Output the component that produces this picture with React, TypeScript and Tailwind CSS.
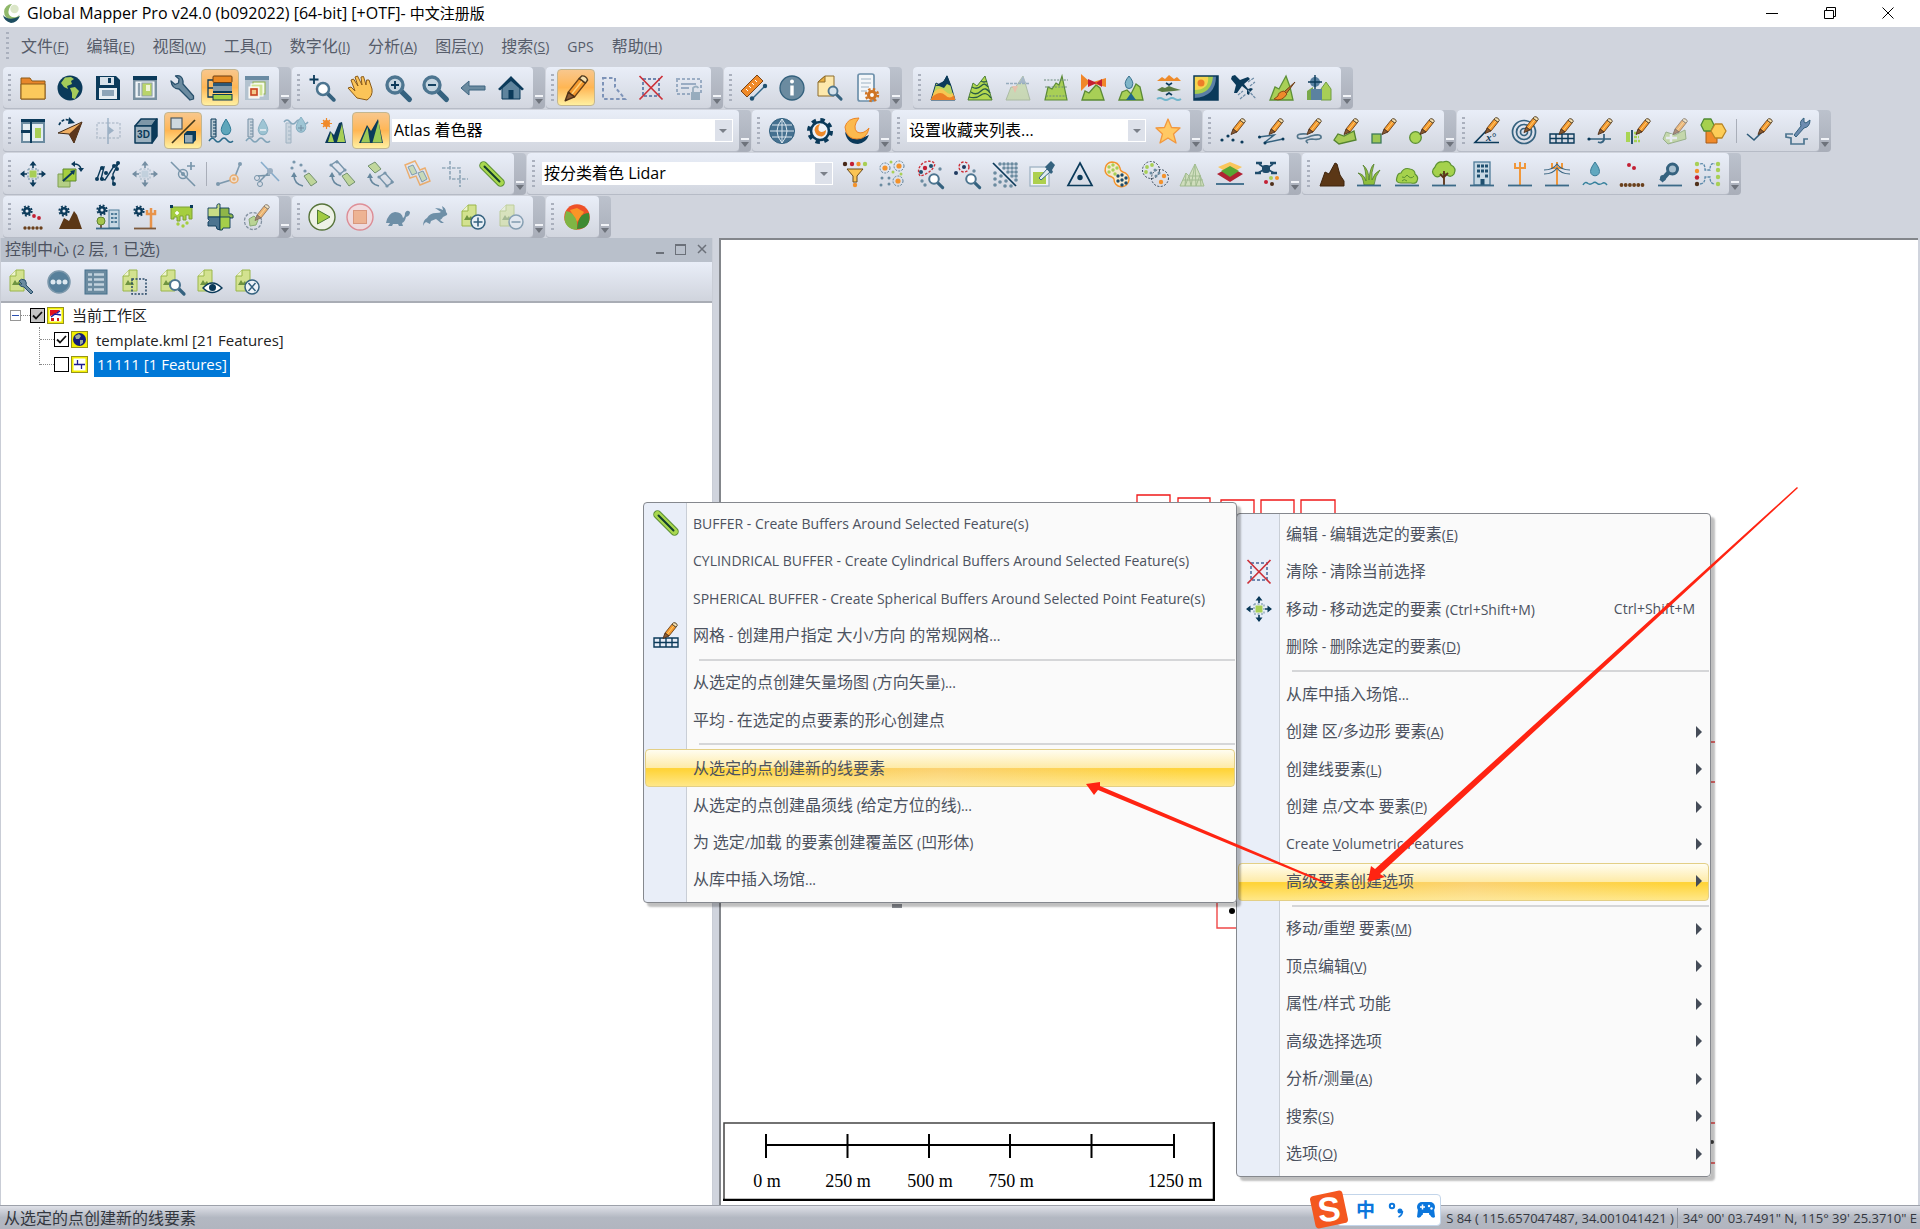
import React, { useState } from "react";

const NAVY = "#0b3a5a";
const SLATE = "#6b8ba0";
const GREEN = "#a8cf56";
const ORANGE = "#f3922c";

const Pencil = ({ t = "" }: { t?: string }) => (
  <g transform={t} strokeWidth="0.9" strokeLinejoin="round">
    <path d="M13 11 20 2.2 24 5.2 17 14Z" fill="#f59a2e" stroke="#6b4218" />
    <path d="M15 12.5 22 3.7" stroke="#ffd27a" />
    <path d="M13 11 17 14 11 16.5Z" fill="#8a5a32" stroke="#4e3018" />
    <path d="M20 2.2 21.6.6Q24.4.3 25.4 3.2L24 5.2Z" fill="#f4dfae" stroke="#4e3a20" />
  </g>
);

const Gear = ({ x, y, r, fill = NAVY, hole = "#e4e8f1" }: { x: number; y: number; r: number; fill?: string; hole?: string }) => (
  <g>
    <circle cx={x} cy={y} r={r * 0.85} fill="none" stroke={fill} strokeWidth={r * 0.35} strokeDasharray={`${r * 0.34} ${r * 0.33}`} />
    <circle cx={x} cy={y} r={r * 0.72} fill={fill} />
    <circle cx={x} cy={y} r={r * 0.28} fill={hole} />
  </g>
);

const Lens = ({ x, y, r = 5, fill = "#fff" }: { x: number; y: number; r?: number; fill?: string }) => (
  <g>
    <path d={`M${x + r * 0.8} ${y + r * 0.8}l${r} ${r}`} stroke="#35627f" strokeWidth={r * 0.65} strokeLinecap="round" />
    <circle cx={x} cy={y} r={r} fill={fill} stroke="#4d7590" strokeWidth={r * 0.42} />
  </g>
);

const Page = () => (
  <g>
    <path d="M2 7 8 1H16V22H2Z" fill="#d3e28f" stroke="#9ab64b" />
    <path d="M8 1V7H2" fill="#eef4cf" stroke="#9ab64b" />
    <path d="M4 16 7 11 9 14 11 12 13 16Z" fill="#6f9440" />
  </g>
);

const Dots = ({ at, fill, r = 1.6 }: { at: number[][]; fill: string; r?: number }) => (
  <g fill={fill}>
    {at.map(([x, y]) => (
      <circle key={`${x}-${y}`} cx={x} cy={y} r={r} />
    ))}
  </g>
);

const Ground = () => <path d="M1 24.5H25" stroke="#3c6a88" strokeWidth="1.8" />;

const Move = ({ fill = GREEN }: { fill?: string }) => (
  <g>
    <path d="M13 1V7M13 19V25M1 13H7M19 13H25" stroke={NAVY} strokeWidth="1.6" />
    <path d="M13 0 16.5 4.5H9.5ZM13 26 16.5 21.5H9.5ZM0 13 4.5 9.5V16.5ZM26 13 21.5 9.5V16.5Z" fill={NAVY} />
    <rect x="8" y="8" width="10" height="10" fill="none" stroke={SLATE} strokeDasharray="2 1.5" />
    <rect x="9.5" y="9.5" width="7" height="7" fill={fill} />
  </g>
);

const GridShape = () => (
  <g>
    <path d="M1 16H25V25H1ZM1 20.5H25M7 16V25M13 16V25M19 16V25" fill="none" stroke={NAVY} strokeWidth="1.4" />
    <Pencil t="translate(-1 0)" />
  </g>
);

const Gauge = () => (
  <g>
    <path d="M3 1H8V19H3Z" fill="#b9c9d3" stroke={NAVY} />
    <path d="M5 4H8M5 7H8M5 10H8M5 13H8M5 16H8" stroke={NAVY} />
    <path d="M1 23Q4 18 7 22T13 22 19 22 25 23" fill="none" stroke="#2a6a8a" strokeWidth="1.5" />
    <path d="M18 1Q12 10 13.5 13.5A4.7 4.7 0 0 0 22.5 13.5Q24 10 18 1Z" fill="#5ea6bb" stroke="#2f7a96" />
  </g>
);

const icons: Record<string, React.ReactNode> = {
  open: (
    <g stroke="#8a5a18">
      <path d="M1 24V3H10L12 6H25V24Z" fill="#e8862a" />
      <path d="M1 24V9H25V24Z" fill="#fbc95c" />
    </g>
  ),
  globe: (
    <g>
      <circle cx="13" cy="13" r="12.5" fill={NAVY} />
      <path d="M4 8 8 2.5 14 2 17 4 14 6 15 9 10 11 11 14 7 12ZM13 13 18 12 22 16 18 24 15 23 15 18Z" fill="#a5cb5a" />
    </g>
  ),
  save: (
    <g>
      <path d="M1 1H21L25 5V25H1Z" fill={NAVY} />
      <rect x="5" y="2" width="14" height="8" fill="#d7e1e9" />
      <rect x="13" y="3" width="3" height="5" fill={NAVY} />
      <rect x="4" y="13" width="18" height="11" fill="#e6edf2" />
      <rect x="7" y="15" width="12" height="6" fill="#8ea5b8" />
    </g>
  ),
  layout: (
    <g>
      <rect x="1" y="1" width="24" height="24" fill="#7890a0" />
      <rect x="1" y="1" width="24" height="4" fill={NAVY} />
      <rect x="4" y="7" width="18" height="15" fill="#dfe7ec" stroke="#fff" />
      <path d="M7 8V21" stroke="#7890a0" strokeWidth="1.6" />
      <rect x="10" y="8" width="10" height="13" fill="#b9d46a" stroke="#8fa0ac" />
      <rect x="14" y="10" width="4" height="6" fill="#eef4d6" />
    </g>
  ),
  wrench: (
    <path d="M2 6 6 9.5 9.5 8 10 4 6.5 1Q13-.5 14 6L14 9 24.5 21 24.5 24 21 25 10 14Q3 14 2 6Z" fill={SLATE} stroke="#28506c" strokeWidth="1.3" strokeLinejoin="round" />
  ),
  control: (
    <g>
      <path d="M6 5H1V22H6M1 13H6" fill="none" stroke={NAVY} strokeWidth="1.3" />
      <rect x="6" y="1" width="19" height="6.5" rx="1" fill="#ea8822" stroke="#6b3f14" />
      <rect x="6" y="8" width="19" height="3" fill="#2c5878" />
      <rect x="6" y="11" width="19" height="5" fill="#8399a8" />
      <rect x="6" y="16" width="19" height="2" fill={NAVY} />
      <rect x="6" y="19.5" width="19" height="5.5" fill="#a3cf45" stroke={NAVY} />
    </g>
  ),
  overlay: (
    <g>
      <rect x="1" y="1" width="24" height="24" fill="#b4c3cf" />
      <rect x="1" y="1" width="24" height="4" fill="#6a8ba3" />
      <rect x="9" y="7" width="12" height="12" fill="#edf4dc" stroke="#8fb04c" />
      <rect x="7" y="9" width="12" height="12" fill="#cfe392" stroke="#fff" />
      <rect x="5" y="12" width="10" height="11" fill="#f6ecd8" stroke="#fff" />
      <rect x="7" y="14" width="6" height="6" fill="#f3c98a" stroke="#c8431f" strokeWidth="1.6" />
    </g>
  ),
  zoomBox: (
    <g>
      <path d="M5 0V9M.5 4.5H9.5" stroke={NAVY} strokeWidth="1.8" />
      <Lens x={14} y={14} r={6} />
    </g>
  ),
  pan: (
    <path d="M1 13 4 12 8 16 4 5 6.5 4 11 11 8 2 10.5 1 15 10 14 2 16.5 1.5 19 10 19.5 5 22 5 25 14Q26 21 20 25L10 23Z" fill="#fbc458" stroke="#8a5a18" strokeLinejoin="round" />
  ),
  zoomIn: (
    <g>
      <Lens x={10} y={10} r={8} fill="#c5d5e0" />
      <path d="M10 6V14M6 10H14" stroke={NAVY} strokeWidth="1.9" />
    </g>
  ),
  zoomOut: (
    <g>
      <Lens x={10} y={10} r={8} fill="#c5d5e0" />
      <path d="M6 10H14" stroke={NAVY} strokeWidth="1.9" />
    </g>
  ),
  back: <path d="M1 13 9 6V11H25V15H9V20Z" fill={SLATE} stroke="#3e6480" />,
  home: (
    <g>
      <path d="M4 13V24H22V13L13 4Z" fill="#5f849d" stroke={NAVY} />
      <path d="M0 14 13 1 26 14 24 15.5 13 6 2 15.5Z" fill={NAVY} />
      <rect x="10.5" y="15" width="5" height="9" fill={NAVY} />
    </g>
  ),
  edit: <Pencil t="translate(-15 0) scale(1.56)" />,
  lasso: (
    <path d="M2 3H14V12L24 24H2Z" fill="none" stroke="#7d93b8" strokeWidth="2" strokeDasharray="3.5 2.5" />
  ),
  clear: (
    <g>
      <rect x="5" y="4" width="16" height="17" fill="none" stroke="#6f87b0" strokeWidth="2" strokeDasharray="3 2" />
      <path d="M1.5 1 24.5 24.5M24.5 1 1.5 24.5" stroke="#cc3038" strokeWidth="1.7" />
    </g>
  ),
  unlock: (
    <g opacity="0.6">
      <rect x="1" y="4" width="24" height="15" fill="none" stroke="#6c88a8" strokeWidth="2" strokeDasharray="3 2" />
      <path d="M5 9H20M5 13H13" stroke="#6c88a8" strokeWidth="2" />
      <rect x="15" y="17" width="9" height="8" fill="#6c8ca3" />
      <path d="M17 17V13Q20 10 22.5 13" fill="none" stroke="#6c8ca3" strokeWidth="1.8" />
    </g>
  ),
  measure: (
    <g>
      <path d="M0 16 16 0 22 6 6 22Z" fill="#f08a28" stroke="#7a4416" />
      <path d="M5 14 7 16M8 11 10 13M11 8 13 10M14 5 16 7" stroke="#fff" />
      <path d="M11 24 24 11" stroke="#2f6485" strokeWidth="1.5" />
      <Dots at={[[11, 23.5], [24, 11]]} fill="#1f5070" r={2.2} />
    </g>
  ),
  info: (
    <g>
      <circle cx="13" cy="13" r="12" fill={SLATE} stroke="#34617d" strokeWidth="1.3" />
      <circle cx="13" cy="6.5" r="2" fill="#fff" />
      <path d="M13 10.5V20.5" stroke="#fff" strokeWidth="3.4" />
    </g>
  ),
  search: (
    <g>
      <path d="M1 21V7L8 1H17V21Z" fill="#fde8ac" stroke="#8d6c2c" />
      <path d="M1 7H8V1Z" fill="#e9ad3e" stroke="#8d6c2c" />
      <Lens x={16} y={16} r={4.5} fill="#d5e2ec" />
    </g>
  ),
  script: (
    <g>
      <rect x="3" y="-1" width="16" height="27" rx="2" fill="#f3f6f9" stroke="#6d90ab" strokeWidth="1.7" />
      <path d="M6 4H16M6 8H16M6 12H14M6 16H12" stroke="#bccad6" strokeWidth="1.5" />
      <Gear x={17} y={20} r={7} fill="#cf7424" hole="#fff" />
    </g>
  ),
  elev: (
    <g>
      <path d="M1 25 6 8 10 10 14 6 17 1 21 11 25 25Z" fill="#bcd35d" stroke={NAVY} />
      <path d="M5 11 10 8 14 6 17 0 21 11 17 9 14 13 9 11Z" fill={NAVY} />
      <path d="M4 17Q10 11 15 16T23 18L25 25H1Z" fill="#f6c752" />
      <path d="M2 22Q10 15 15 20T24 20L25 25H1Z" fill="#ec7f25" />
    </g>
  ),
  contour: (
    <g>
      <path d="M1 25 6 8 10 11 18 1 21 11 25 25Z" fill="#b3d94f" stroke="#4c7f34" />
      <path d="M5 12Q10 15 14 11T21 12M4 17Q9 21 14 16T23 18M2 22Q9 24 14 20T24 23M14 6Q17 8 20 6" fill="none" stroke="#2a5c46" strokeWidth="1.3" />
    </g>
  ),
  cut: (
    <g opacity="0.5">
      <path d="M1 25 6 12 10 13 18 1 21 11 25 25Z" fill="#b9d386" stroke="#7f9a63" />
      <path d="M14 8 18 1 21 8Z" fill="#6d8ca3" />
      <path d="M1 8.5H25" stroke="#4f7590" strokeWidth="1.6" strokeDasharray="3 1" />
      <path d="M7 11H13L10 18Z" fill="#f0a070" />
    </g>
  ),
  volume: (
    <g>
      <path d="M2 25 5 12 9 14 13 8 16 10 19 1 24 25Z" fill={GREEN} stroke="#5b8a36" strokeWidth="1.2" />
      <path d="M1 5H25M2 12H24M3 21H24" stroke="#6b8a7c" strokeDasharray="2 1.3" />
    </g>
  ),
  viewshed: (
    <g>
      <path d="M2 25 5 16 9 18 16 10 20 13 24 25Z" fill={GREEN} stroke="#5b8a36" strokeWidth="1.3" />
      <path d="M1-1 10 7 1 16Z" fill="#f0862a" />
      <path d="M10 8 26 3V12Z" fill="#f0862a" />
      <path d="M8 4 17 8 8 12ZM22 4V12L16 8Z" fill="#c52030" />
    </g>
  ),
  watershed: (
    <g>
      <path d="M1 25 4 17 9 15 13 19 18 9 22 12 25 25Z" fill={GREEN} stroke="#5b8a36" strokeWidth="1.3" />
      <path d="M8 25 13 18 18 25Z" fill="#1f668c" />
      <path d="M11 1Q6 7 7.5 10A3.5 3.5 0 0 0 14.5 10Q16 7 11 1Z" fill="#7fb5c8" stroke="#38718e" />
    </g>
  ),
  combine: (
    <g>
      <path d="M1 6 6 2 9 4 13 0 18 4 21 2 25 6Z" fill="#ee8b2b" />
      <path d="M1 15 6 12 9 13 13 11 18 13 25 15 18 16 6 17Z" fill="#5c7c42" />
      <path d="M10 8 13 10 16 8M10 20 13 18 16 20" stroke={NAVY} strokeWidth="1.7" fill="none" />
      <path d="M1 24Q4 22 7 24T13 24 19 24 25 24" stroke="#6fb5cb" strokeWidth="2" fill="none" />
    </g>
  ),
  heat: (
    <g>
      <rect x="1" y="1" width="24" height="24" fill={NAVY} />
      <path d="M1 1H23Q23 22 1 23Z" fill="#5b7fa5" />
      <path d="M1 1H20Q19 19 1 19Z" fill="#a7cd4d" />
      <path d="M1 1H15Q17 15 1 15Z" fill="#f6d54e" />
      <circle cx="8" cy="8" r="3.5" fill="#ee7d28" />
      <rect x="1" y="1" width="24" height="24" fill="none" stroke={NAVY} strokeWidth="1.5" />
    </g>
  ),
  plane: (
    <g>
      <path d="M1 1 4 0 9 5 17 2 19 4 13 9 17 14 20 13 22 14 19 17 18 20 16 19 16 15 11 11 6 18 3 18 5 10 0 4Z" fill={NAVY} />
      <path d="M17 15 25 24M17 7 23 3M19 11 24 7M7 20 12 16M9 24 15 19" stroke="#6d8ba6" strokeWidth="1.2" strokeDasharray="3 1" />
    </g>
  ),
  paint: (
    <g>
      <path d="M1 25 6 12 10 14 17 1 21 12 24 25Z" fill={GREEN} stroke="#5d9037" strokeWidth="1.3" />
      <path d="M26 7 15 17 17 19Z" fill="#c77930" stroke="#6a3c14" />
      <path d="M15 16Q9 17 9 21L5 24Q13 27 18 19Z" fill="#ee8a2a" stroke="#8a4a16" />
    </g>
  ),
  fly: (
    <g>
      <path d="M1 25V16L7 12V25Z" fill="#79a84a" />
      <path d="M15 25V14L20 7 25 14V25Z" fill={GREEN} stroke="#6f9c43" />
      <rect x="5" y="14" width="11" height="11" fill="#5b82a0" />
      <circle cx="9" cy="7" r="5" fill="#5880a0" />
      <path d="M9 0V14M2 7H16" stroke={NAVY} strokeWidth="1.4" />
    </g>
  ),
  panels: (
    <g>
      <rect x="1" y="1" width="24" height="24" fill={SLATE} />
      <path d="M3 6H10V12H3ZM3 15H10V23H3ZM12 6H23V23H12Z" fill="#e4edf2" />
      <path d="M1 1H25V4H1ZM1 12H11V15H1ZM10 1H12V25H10Z" fill={NAVY} />
      <rect x="15" y="10" width="6" height="10" fill={GREEN} />
    </g>
  ),
  north: (
    <g>
      <path d="M25 4 1 15 12 16 17 25Z" fill="#f0b065" stroke="#422b17" />
      <path d="M25 4 12 16 17 25Z" fill="#5c361b" />
      <path d="M2 7Q6-1 14 3" fill="none" stroke={NAVY} strokeWidth="1.7" strokeDasharray="3 1.5" />
      <path d="M12-1 18 5 11 6Z" fill={NAVY} />
    </g>
  ),
  mirror: (
    <g opacity="0.5">
      <path d="M13 5H2V20H13M13 5H25V20H13" fill="none" stroke="#8fa0b2" strokeWidth="1.5" strokeDasharray="2.5 1.5" />
      <path d="M13 0V26" stroke="#5e82a0" strokeWidth="1.5" />
      <path d="M13 8 19 12.5 13 17Z" fill="#5e82a0" />
    </g>
  ),
  view3d: (
    <g strokeLinejoin="round">
      <path d="M2 8 8 1H24L19 8Z" fill="#7d97a8" stroke={NAVY} strokeWidth="1.5" />
      <path d="M19 8 24 1V18L19 25Z" fill={NAVY} stroke={NAVY} strokeWidth="1.5" />
      <rect x="2" y="8" width="17" height="17" fill="#9cb1bf" stroke={NAVY} strokeWidth="1.5" />
      <text x="10.5" y="20" textAnchor="middle" fontSize="10" fontWeight="700" fontFamily="Liberation Sans, sans-serif" fill={NAVY}>3D</text>
    </g>
  ),
  link3d: (
    <g>
      <rect x="1" y="0" width="11" height="11" fill="#cdd8df" stroke="#4b5b64" strokeWidth="1.2" />
      <path d="M2 25 25 2" stroke="#443a1c" strokeWidth="1.7" />
      <path d="M14 16 17 13H26V22L23 25H14Z" fill={NAVY} />
      <rect x="14.5" y="16.5" width="8.5" height="8.5" fill="#93a9b8" stroke={NAVY} />
    </g>
  ),
  water: <Gauge />,
  waterMinus: (
    <g opacity="0.5">
      <Gauge />
      <path d="M15 12H21" stroke="#fff" strokeWidth="1.5" />
    </g>
  ),
  waterPlus: (
    <g opacity="0.5">
      <path d="M3 5H8V25H3ZM5 9H8M5 13H8M5 17H8M5 21H8" fill="#b9c9d3" stroke={SLATE} />
      <path d="M1 4Q4 0 7 4T13 4 19 4 25 4" fill="none" stroke="#2a6a8a" strokeWidth="1.5" />
      <path d="M18-1Q12 7 13.5 11A4.7 4.7 0 0 0 22.5 11Q24 7 18-1Z" fill="#5ea6bb" stroke="#2f7a96" />
      <path d="M15 10H21M18 7V13" stroke={NAVY} />
    </g>
  ),
  sunHill: (
    <g>
      <path d="M5.5 0V11M0 5.500H11M2 2 9 9M9 2 2 9" stroke="#ee8a2a" strokeWidth="1.2" />
      <circle cx="5.5" cy="5.5" r="3.5" fill="#f08a2a" />
      <path d="M4 25 9 13 13 17 18 5 21 4 25 25Z" fill={NAVY} />
      <path d="M7 24 10 14 13 24ZM16 24 21 6 24 24Z" fill={GREEN} />
    </g>
  ),
  hill: (
    <g>
      <path d="M1 25 9 7 13 13 20 1 25 25Z" fill={NAVY} />
      <path d="M3 24.500 9.500 9 12 24.500ZM14.500 24.500 20.500 3 24 24.500Z" fill="#9cc956" />
    </g>
  ),
  web: (
    <g fill="none" stroke="#dbe6ee">
      <circle cx="13" cy="13" r="12.5" fill="#467190" stroke="#31607f" />
      <path d="M1 13H25M3 7H23M3 19H23M13 1V25M13 1Q3 13 13 25M13 1Q23 13 13 25" />
    </g>
  ),
  moonGear: (
    <g>
      <circle cx="13" cy="13" r="11" fill="none" stroke={NAVY} strokeWidth="4" strokeDasharray="4.32 4.32" />
      <circle cx="13" cy="13" r="9" fill="#eef2f8" stroke={NAVY} strokeWidth="2.6" />
      <path d="M13 6Q8 7 7.5 12Q9 19 15 18.5Q19 17 19 12Q14 16 11.5 12Q11 9 13 6Z" fill="#f08a2a" />
    </g>
  ),
  moon: (
    <g>
      <path d="M1 14Q3 26 14 26Q22 25 25 17Q13 24 1 14Z" fill={NAVY} />
      <path d="M15 0Q3 0 1 9Q2 21 13 21Q23 21 25 10Q19 17 13 14Q8 9 15 0Z" fill="#fbb94e" stroke="#ec8527" />
    </g>
  ),
  star: (
    <path d="M13 1 16.5 9.500 25 10 18.500 16 21 25 13 20 5 25 7.500 16 1 10 9.500 9.500Z" fill="#ffc964" stroke="#f2983f" strokeWidth="1.3" strokeLinejoin="round" />
  ),
  drawPoints: (
    <g>
      <Dots at={[[2, 22], [8, 18], [13, 22], [22, 24]]} fill={NAVY} />
      <Pencil />
    </g>
  ),
  drawLine: (
    <g>
      <path d="M1 19 16 17 6 25 25 21" fill="none" stroke="#35627f" strokeWidth="1.5" />
      <Dots at={[[1.5, 19], [7, 25], [25, 21]]} fill={NAVY} r={1.5} />
      <Pencil />
    </g>
  ),
  drawFree: (
    <g>
      <path d="M11 16Q-1 15 2 20Q5 22 15 18Q26 15 25 20Q23 22 16 21Q7 22 12 25" fill="none" stroke="#54768c" strokeWidth="1.7" />
      <Pencil />
    </g>
  ),
  drawArea: (
    <g>
      <path d="M1 22 5 16 11 18 21 13 23 22 6 26Z" fill="#a6ca57" stroke="#54842f" strokeWidth="1.3" />
      <Pencil />
    </g>
  ),
  drawRect: (
    <g>
      <rect x="1" y="16" width="9" height="9" fill="#9cc654" stroke="#3e7a5a" strokeWidth="1.3" />
      <Pencil />
    </g>
  ),
  drawCircle: (
    <g>
      <circle cx="6.5" cy="19.5" r="5.8" fill="#a9d553" stroke="#5b8f34" strokeWidth="1.3" />
      <Pencil />
    </g>
  ),
  angle: (
    <g>
      <path d="M25 24.5H1L14 11" fill="none" stroke={NAVY} strokeWidth="1.6" />
      <text x="17" y="23" textAnchor="middle" fontSize="11" fontStyle="italic" fontWeight="700" fontFamily="Liberation Serif, serif" fill={NAVY}>x°</text>
      <Pencil t="translate(0 -1)" />
    </g>
  ),
  rings: (
    <g>
      <g fill="none" stroke="#35627f" strokeWidth="1.7">
        <circle cx="12" cy="14" r="11.5" />
        <circle cx="12" cy="14" r="7.5" />
        <circle cx="12" cy="14" r="3.5" />
      </g>
      <Pencil t="translate(1 -2)" />
    </g>
  ),
  grid: <GridShape />,
  cogo: (
    <g>
      <path d="M1 21H24M17 16V22Q15 26 11 24" fill="none" stroke="#35627f" strokeWidth="1.7" />
      <Dots at={[[2, 21]]} fill={NAVY} />
      <Pencil />
    </g>
  ),
  mirrorDraw: (
    <g>
      <path d="M7 12V26" stroke={NAVY} strokeWidth="1.7" />
      <path d="M5 14H1V24H5Z" fill="#a9d553" />
      <path d="M9 15H15M9 19H14M9 23H15" stroke="#a9d553" strokeWidth="2.6" strokeDasharray="3 1" />
      <Pencil />
    </g>
  ),
  moveArea: (
    <g opacity="0.6">
      <path d="M1 21 4 14 13 17 23 12 24 21 6 26Z" fill="#b6d385" stroke="#6f9450" />
      <path d="M4 20H15M9 16V24" stroke="#eef2f7" strokeWidth="2.5" />
      <Pencil />
    </g>
  ),
  hexes: (
    <g strokeLinejoin="round">
      <path d="M6 10H17V25H6Z" fill="#f08a2a" stroke="#a65c1b" />
      <path d="M1 7 4 1H11L14 7 11 13H4Z" fill="#a6d04c" stroke="#4f8a35" strokeWidth="1.3" />
      <path d="M11 13 15 6H22L26 13 22 20H15Z" fill="#fdcd57" stroke="#b98526" strokeWidth="1.3" />
    </g>
  ),
  finish: (
    <g>
      <path d="M0 16 7 22 15 14" fill="none" stroke="#2d5a78" strokeWidth="1.6" />
      <Pencil />
    </g>
  ),
  repair: (
    <g>
      <path d="M9 16H2V19L7 20V26H20V21H24" fill="none" stroke="#4d7590" strokeWidth="1.7" />
      <path d="M10 17 17 8Q15 3 20 0L20 4 22 5 26 2Q26 9 20 10L12 19Z" fill="#6d8cb0" stroke="#35627f" />
    </g>
  ),
  move: <Move />,
  rotate: (
    <g>
      <path d="M1 13H13V26H1Z" fill="#b4cf85" stroke="#7ea050" />
      <path d="M6 8H19V20H6Z" fill="#a6cf3f" stroke="#5d8a30" />
      <path d="M6 20 16 11" stroke={NAVY} strokeWidth="2" />
      <path d="M18 9 17 14 13 10Z" fill={NAVY} />
      <path d="M17 3Q23 3 24 8" fill="none" stroke={NAVY} strokeWidth="1.5" />
      <path d="M18 0V6L14 3ZM21 7H27L24 11Z" fill={NAVY} />
    </g>
  ),
  vertices: (
    <g>
      <path d="M2 18 6 7 9 6 6 18 10 19 19 5 23 3 18 13 18 23" fill="none" stroke={NAVY} strokeWidth="1.4" />
      <Dots at={[[2, 18], [7, 7], [7, 18], [11, 12], [19, 5], [23, 2], [22, 8], [18, 17], [19, 23]]} fill={NAVY} r={2} />
    </g>
  ),
  moveOff: (
    <g opacity="0.5">
      <Move fill="#a8c0d0" />
    </g>
  ),
  addVertex: (
    <g opacity="0.6">
      <path d="M1 1 25 25" stroke="#35627f" strokeWidth="1.6" />
      <circle cx="13" cy="13" r="4.5" fill="none" stroke="#35627f" strokeWidth="1.4" />
      <circle cx="13" cy="13" r="2" fill="#35627f" />
      <path d="M21 1V9M17 5H25" stroke="#35627f" strokeWidth="1.7" />
    </g>
  ),
  trace: (
    <g opacity="0.65">
      <path d="M2 23 18 18 24 3" fill="none" stroke="#4d7590" strokeWidth="1.6" />
      <Dots at={[[2, 23], [24, 3]]} fill="#4d7590" r={2} />
      <circle cx="18" cy="18" r="4" fill="#f8dfc3" stroke={ORANGE} strokeWidth="1.5" />
      <circle cx="18" cy="18" r="1.8" fill={ORANGE} />
    </g>
  ),
  split: (
    <g opacity="0.6">
      <path d="M7 1 25 20" stroke="#4c88b5" strokeWidth="1.6" />
      <path d="M17 9 5 21M4 15 16 14" stroke="#35627f" strokeWidth="1.5" />
      <circle cx="16" cy="10" r="3" fill="#6d8ca6" />
      <circle cx="3" cy="17" r="2.5" fill="none" stroke="#35627f" />
      <circle cx="6" cy="23" r="2.5" fill="none" stroke="#35627f" />
    </g>
  ),
  convertPoints: (
    <g opacity="0.7">
      <Dots at={[[3, 1], [1, 7], [10, 4], [14, 10]]} fill="#4d7590" />
      <path d="M13 15 18 12 26 21 20 25Z" fill="#b4d27a" stroke="#47703c" />
      <path d="M3 14Q3 23 12 25" fill="none" stroke="#35627f" strokeWidth="1.6" />
      <path d="M0 16 3 11 6 16Z" fill="#35627f" />
    </g>
  ),
  convertLine: (
    <g opacity="0.7">
      <path d="M2 4 8 0 16 9 11 13Z" fill="none" stroke="#4d7590" strokeWidth="1.4" />
      <Dots at={[[2, 4], [8, 1], [16, 9], [11, 13]]} fill="#4d7590" />
      <path d="M13 15 18 12 26 21 20 25Z" fill="#b4d27a" stroke="#47703c" />
      <path d="M3 14Q3 23 12 25" fill="none" stroke="#35627f" strokeWidth="1.6" />
      <path d="M0 16 3 11 6 16Z" fill="#35627f" />
    </g>
  ),
  convertArea: (
    <g opacity="0.7">
      <path d="M1 5 8 1 14 8 8 12Z" fill="#b4d27a" stroke="#47703c" />
      <path d="M12 16 18 12 26 21 20 25Z" fill="none" stroke="#4d7590" strokeWidth="1.4" />
      <Dots at={[[12, 16], [18, 12], [25, 21], [20, 25]]} fill="#4d7590" />
      <path d="M3 15Q3 23 12 25" fill="none" stroke="#35627f" strokeWidth="1.6" />
      <path d="M0 17 3 12 6 17Z" fill="#35627f" />
    </g>
  ),
  combineAreas: (
    <g opacity="0.65">
      <path d="M1 4 11 0 16 9 21 7 26 20 16 24 12 15 6 17Z" fill="none" stroke={ORANGE} strokeWidth="1.4" />
      <path d="M4 6 9 4 13 12 8 14ZM14 12 19 10 23 18 18 21Z" fill="#bcd6a0" stroke="#4d7590" />
    </g>
  ),
  crop: (
    <path opacity="0.45" d="M8 0V18H26M0 7H18V26" fill="none" stroke="#35627f" strokeWidth="1.7" strokeDasharray="3.5 1.5" />
  ),
  buffer: (
    <g strokeLinecap="round">
      <path d="M4.5 4.500 21.500 21.500" stroke="#5b8f34" strokeWidth="8.5" />
      <path d="M4.5 4.500 21.500 21.500" stroke="#a9d84f" strokeWidth="6.5" />
      <path d="M5.500 5.500 20.500 20.500" stroke="#123c2c" strokeWidth="2" />
    </g>
  ),
  filter: (
    <g>
      <Dots at={[[3, 3]]} fill="#472818" r={2.2} />
      <Dots at={[[10, 3]]} fill="#c32034" r={2.2} />
      <Dots at={[[16.5, 3], [13, 24]]} fill={ORANGE} r={2.2} />
      <Dots at={[[23, 3]]} fill={GREEN} r={2.2} />
      <path d="M5 8H21L15 15V21H11V15Z" fill="#fbc555" stroke="#6a4a1c" strokeLinejoin="round" />
    </g>
  ),
  cluster: (
    <g>
      <g fill="none" stroke="#5c8199" strokeDasharray="2 1.2">
        <circle cx="6" cy="7" r="5" />
        <circle cx="20" cy="5" r="5" />
        <circle cx="19" cy="20" r="5" />
      </g>
      <Dots at={[[6, 7], [20, 5], [19, 20]]} fill={ORANGE} r={2.6} />
      <Dots at={[[12, 1], [14, 11], [22, 13]]} fill={GREEN} r={1.5} />
      <Dots at={[[3, 17], [10, 17], [2, 24], [10, 23]]} fill={SLATE} r={1.5} />
    </g>
  ),
  clusterFind: (
    <g>
      <path d="M3 15Q-1 8 6 2Q14-2 18 3Q15 12 3 15Z" fill="none" stroke="#cc3038" strokeWidth="1.4" strokeDasharray="2.5 1.5" />
      <Dots at={[[8, 7]]} fill="#c32034" r={2.2} />
      <Dots at={[[4, 11], [14, 5]]} fill="#1f5070" r={2} />
      <Dots at={[[23, 8], [5, 20], [8, 24]]} fill={SLATE} r={1.7} />
      <Lens x={17} y={18} r={4.8} />
    </g>
  ),
  pointFind: (
    <g>
      <circle cx="10" cy="6" r="5" fill="none" stroke="#cc3038" strokeWidth="1.4" strokeDasharray="2.5 1.5" />
      <Dots at={[[10, 6], [2, 12]]} fill="#1f3a60" r={2} />
      <Dots at={[[20, 10]]} fill={SLATE} r={1.7} />
      <Lens x={17} y={18} r={4.8} />
    </g>
  ),
  thin: (
    <g>
      <Dots at={[[8, 3], [12, 3], [16, 3], [20, 3], [24, 3], [12, 7], [16, 7], [20, 7], [24, 7], [16, 11], [20, 11], [24, 11], [20, 15], [24, 15], [24, 19]]} fill={SLATE} r={1.8} />
      <Dots at={[[3, 12], [9, 15], [3, 18], [14, 20], [8, 21], [3, 24], [13, 25], [19, 25]]} fill={SLATE} r={1.8} />
      <path d="M1 2 24 25" stroke={NAVY} strokeWidth="1.7" />
    </g>
  ),
  picker: (
    <g>
      <rect x="1" y="6" width="19" height="19" fill="#eef2f6" stroke="#9fb3c4" strokeWidth="1.3" />
      <rect x="4" y="11" width="13" height="12" fill="#add04e" />
      <path d="M10 17 18 8 21 11 12 19Z" fill="#dfeaf2" stroke="#3c6a88" />
      <path d="M16 6 18 4 22 0 26 4 23 9 24 11 22 13Z" fill="#35627f" />
    </g>
  ),
  triangle: (
    <g>
      <path d="M13 2 25 24.5H1Z" fill="none" stroke={NAVY} strokeWidth="1.7" />
      <circle cx="13" cy="16.5" r="2.7" fill={NAVY} />
    </g>
  ),
  segment: (
    <g>
      <path d="M8 1A7.5 7.5 0 0 0 5 15Q9 16 10 18A7.5 7.5 0 1 0 19 11Q16 10 16 7Q14 1 8 1Z" fill="#f5ead0" stroke={ORANGE} strokeWidth="1.4" />
      <Dots at={[[5, 6], [9, 4], [13, 7], [5, 11], [9, 9], [11, 13]]} fill={GREEN} r={1.7} />
      <Dots at={[[14, 15], [18, 14], [22, 17], [14, 20], [18, 19], [22, 22], [18, 24]]} fill="#1f4c6c" r={1.7} />
    </g>
  ),
  compare: (
    <g>
      <circle cx="9" cy="9" r="8.5" fill="none" stroke="#3a4a5a" strokeDasharray="2 1.5" />
      <circle cx="18" cy="17" r="8.5" fill="none" stroke="#3a4a5a" strokeDasharray="2 1.5" />
      <Dots at={[[5, 6], [10, 4], [4, 11]]} fill={GREEN} r={1.9} />
      <Dots at={[[9, 12], [13, 9], [14, 15], [17, 12]]} fill={SLATE} r={1.5} />
      <Dots at={[[22, 15], [19, 21]]} fill={ORANGE} r={2.2} />
    </g>
  ),
  mesh: (
    <g opacity="0.55" fill="none" stroke="#74a04a">
      <path d="M1 25 7 12 10 15 16 3 21 14 25 25Z" fill="#cadf9e" />
      <path d="M7 12 6 25 10 15 12 25 16 3 17 25 21 14 22 25M4 19 24 19M10 15H21" />
    </g>
  ),
  layers: (
    <g>
      <path d="M0 13 13 6 26 13 13 21Z" fill="#b02233" />
      <path d="M1 6 13 1 25 6 13 13Z" fill="#fac65c" />
      <path d="M4 10 13 5 22 10 13 16Z" fill="#57a634" />
      <path d="M-1 23H27" stroke="#3c6a88" strokeWidth="1.8" />
    </g>
  ),
  drone: (
    <g>
      <path d="M5 3 9 6H15L19 3M4 12 9 9H15L20 12" fill="none" stroke="#1f4c6c" strokeWidth="1.6" />
      <path d="M2 2H8M16 2H22M1 12H7M17 12H23" stroke="#1f4c6c" strokeWidth="2.4" />
      <rect x="8" y="4" width="8" height="8" rx="3" fill="#1f4c6c" />
      <Dots at={[[17, 17]]} fill={GREEN} r={2} />
      <Dots at={[[23, 17]]} fill={ORANGE} r={2} />
      <Dots at={[[12, 21]]} fill="#c32034" r={2} />
      <Dots at={[[18, 23]]} fill="#50301a" r={2} />
    </g>
  ),
  terrain: <path d="M1 25 6 11 10 13 16 2 18 3 21 14 25 20V25Z" fill="#5b3716" stroke="#3e240d" />,
  grass: (
    <g>
      <path d="M8 24Q7 15 2 12Q8 13 10 20Q10 8 7 4Q13 9 13 19Q14 6 18 3Q15 12 16 19Q18 12 24 9Q19 15 18 24Z" fill="#8fbe3c" stroke="#527f2c" strokeWidth="0.8" />
      <Ground />
    </g>
  ),
  bush: (
    <g>
      <path d="M7 22Q1 22 3 16Q4 12 7 12Q10 6 16 8Q21 9 21 13Q25 16 23 20Q22 23 17 22Z" fill="#a5d24c" stroke="#5c9132" strokeWidth="1.2" />
      <path d="M8 16Q11 18 13 14Q17 19 20 15M8 20Q10 17 13 20" fill="none" stroke="#5c9132" />
      <Ground />
    </g>
  ),
  tree: (
    <g>
      <path d="M4 15Q-1 11 4 6Q6 0 12 1Q18-1 20 4Q26 7 23 13Q20 17 16 14L13 12 10 14Q7 17 4 15Z" fill="#a5d24c" stroke="#5c9132" strokeWidth="1.2" />
      <path d="M13 10V24M13 17 9 13M13 16 17 12" stroke="#5a3216" strokeWidth="1.8" />
      <Ground />
    </g>
  ),
  building: (
    <g>
      <rect x="5" y="1" width="16" height="23" fill="#c7d8e4" stroke="#4f7c99" strokeWidth="1.3" />
      <path d="M8 5H11M12 5H15M16 5H19M8 10H11M12 10H15M16 10H19M8 15H11M16 15H19" stroke="#1f5070" strokeWidth="3" />
      <rect x="11.5" y="18" width="4" height="6" fill="#1f5070" />
      <Ground />
    </g>
  ),
  pole: (
    <g>
      <path d="M13 1V24M8 2V7H18V2" fill="none" stroke="#f0973a" strokeWidth="2" />
      <Ground />
    </g>
  ),
  wires: (
    <g>
      <path d="M13 1V24M8 2V7H18V2" fill="none" stroke="#f0973a" strokeWidth="2" />
      <path d="M0 9Q9 9 13 3Q17 9 26 9M0 13Q9 13 13 7Q17 13 26 13" fill="none" stroke="#35627f" strokeWidth="1.1" />
      <Ground />
    </g>
  ),
  waterClass: (
    <g>
      <path d="M13 1Q7 9 9 12.5A4.6 4.6 0 0 0 17 12.5Q19 9 13 1Z" fill="#62a8bf" stroke="#3a7b97" />
      <path d="M1 24Q3 20 6 22.5Q8 24 11 22Q13 20 16 23Q18 24 21 22Q23 21 25 24" fill="none" stroke="#35809c" strokeWidth="1.5" />
    </g>
  ),
  rail: (
    <g>
      <Dots at={[[10, 4], [15, 7]]} fill="#c32034" r={2} />
      <Dots at={[[2.5, 24], [6.7, 24], [10.9, 24], [15.1, 24], [19.3, 24], [23.5, 24]]} fill="#6a401c" r={1.9} />
    </g>
  ),
  key: (
    <g>
      <path d="M4 20 12 11" stroke="#35627f" strokeWidth="4.5" />
      <circle cx="15.5" cy="8" r="5" fill="#a9c0d0" stroke="#35627f" strokeWidth="3" />
      <circle cx="6" cy="17" r="3" fill="#35627f" />
      <Ground />
    </g>
  ),
  classify: (
    <g>
      <Dots at={[[3, 3], [24, 3], [24, 9], [24, 16], [24, 23]]} fill={GREEN} r={2.2} />
      <Dots at={[[3, 10]]} fill={ORANGE} r={2.2} />
      <Dots at={[[3, 16.5]]} fill="#c32034" r={2.2} />
      <Dots at={[[3, 23]]} fill="#50301a" r={2.2} />
      <path d="M6 3Q11 1 11 9H16Q16 1 21 3M6 23Q11 23 11 16H16Q16 23 21 23" fill="none" stroke="#5d8bab" strokeDasharray="3 1" strokeWidth="1.3" />
    </g>
  ),
  autoRail: (
    <g>
      <Gear x={7} y={7} r={5.5} />
      <Dots at={[[14, 12], [19, 14]]} fill="#c32034" r={1.9} />
      <Dots at={[[5, 24], [9, 24], [13, 24], [17, 24], [21, 24]]} fill="#6a401c" r={1.7} />
    </g>
  ),
  autoTerrain: (
    <g>
      <path d="M2 25 7 14 12 17 17 7 20 11 25 25Z" fill="#5b3716" />
      <Gear x={7} y={7} r={5.5} />
    </g>
  ),
  autoBuilding: (
    <g>
      <rect x="14" y="6" width="10" height="18" fill="#c7d8e4" stroke="#4f7c99" />
      <path d="M16 10H22M16 14H22M16 18H22" stroke="#4f7c99" strokeWidth="2" strokeDasharray="2.5 1" />
      <path d="M6 17V24" stroke="#5a3216" strokeWidth="1.5" />
      <circle cx="6" cy="17" r="4" fill="#a5c54c" stroke="#5c8132" />
      <Gear x={7} y={6} r={5.5} />
      <Ground />
    </g>
  ),
  autoPole: (
    <g>
      <path d="M19 4V24M15 6V10H23V6" fill="none" stroke="#e8934a" strokeWidth="2.5" />
      <path d="M2 24.5H24" stroke="#7d5a3c" strokeWidth="1.8" />
      <Gear x={7} y={7} r={5.5} />
    </g>
  ),
  drip: (
    <g>
      <path d="M2 3H23V15H20V11H17V16H14V12H11V17H8V13H5V15H2Z" fill="#a5ce3f" stroke="#7da034" />
      <path d="M8 7V11M6 9H10" stroke="#fff" strokeWidth="1.5" />
      <path d="M1 1H4V4H1ZM21 1H24V4H21Z" fill={NAVY} />
      <Dots at={[[9, 20], [14, 22], [18, 19]]} fill="#a5ce3f" r={1.7} />
    </g>
  ),
  puzzle: (
    <g stroke={NAVY} strokeWidth="0.9">
      <path d="M1 4H10Q9-1 13 0V13H1Z" fill="#c9dc85" />
      <path d="M13 4H22V10Q27 9 26 14H13Z" fill="#8fb548" />
      <path d="M1 13H13V26Q9 26 9 22H1V18Q4 17 1 15Z" fill="#4c7490" />
      <path d="M13 13H23V24H16Q16 27 13 26Z" fill="#a5ce4a" />
    </g>
  ),
  magic: (
    <g opacity="0.65">
      <circle cx="9" cy="17" r="8.5" fill="none" stroke="#52667a" strokeWidth="1.3" strokeDasharray="3 1.5" />
      <path d="M5 15 10 12 14 16 12 21 6 22Z" fill="#a9cf6a" stroke="#5d9037" />
      <Pencil />
    </g>
  ),
  play: (
    <g>
      <circle cx="13" cy="13" r="13" fill="#eef2e6" stroke="#57743a" strokeWidth="1.4" />
      <path d="M8.5 6 21 13 8.500 20Z" fill="#a2cb43" stroke="#4e7a34" />
    </g>
  ),
  stop: (
    <g opacity="0.7">
      <circle cx="13" cy="13" r="13" fill="#f6dadb" stroke="#dd6a72" strokeWidth="1.4" />
      <rect x="6.5" y="6.5" width="13" height="13" fill="#f5a06e" stroke="#d87a50" />
    </g>
  ),
  turtle: (
    <path d="M1 19Q3 9 10 8Q17 8 18 14Q20 13 20 9Q22 5 25 8Q25 12 21 13Q20 18 17 19L18 22H14L13 20H8L7 22H3L5 19Z" fill="#6e8fa7" />
  ),
  rabbit: (
    <path d="M1 22Q1 16 5 14Q8 9 14 9Q18 9 19 8L13 4Q18 4 21 6L20 2Q24 4 24 8Q26 10 25 11L21 13Q20 15 18 16L22 19 19 19 14 15 9 17 8 20 4 18Q2 19 1 22Z" fill="#6e8fa7" />
  ),
  pageAdd: (
    <g>
      <Page />
      <circle cx="18" cy="18" r="7" fill="#e7eff6" stroke="#35627f" strokeWidth="1.5" />
      <path d="M18 13.5V22.5M13.5 18H22.5" stroke="#35627f" strokeWidth="1.6" />
    </g>
  ),
  pageRemove: (
    <g opacity="0.5">
      <Page />
      <circle cx="18" cy="18" r="7" fill="#e7eff6" stroke="#35627f" strokeWidth="1.5" />
      <path d="M13.5 18H22.5" stroke="#35627f" strokeWidth="1.6" />
    </g>
  ),
  leaf: (
    <g>
      <circle cx="13" cy="13" r="12.8" fill="#ee5128" />
      <path d="M6 6 13 4 20 8 13 18Z" fill="#fb9526" />
      <path d="M2 7Q10 8 13 18V26Q1 25 .5 14Z" fill="#7fb544" />
      <path d="M25 9Q14 9 13 25Q25 25 25.5 14Z" fill="#3f8a32" />
    </g>
  ),
  pageWrench: (
    <g>
      <Page />
      <path d="M11 12Q13 9 17 11Q19 14 18 16L25 23 23 25 16 18Q12 18 11 15L14 15Z" fill={SLATE} stroke="#28506c" />
    </g>
  ),
  more: (
    <g>
      <circle cx="13" cy="13" r="11" fill="#57809b" stroke="#7c98ab" strokeWidth="1.5" />
      <Dots at={[[7, 13], [13, 13], [19, 13]]} fill="#dde8f0" r={2.5} />
    </g>
  ),
  tableIcon: (
    <g>
      <rect x="2" y="1" width="22" height="24" fill="#6b8ba0" stroke="#46708c" />
      <path d="M5 5.500H9M11 5.500H21M5 10.500H9M11 10.500H21M5 15.500H9M11 15.500H21M5 20.500H9M11 20.500H21" stroke="#c2d2dd" strokeWidth="2.4" />
    </g>
  ),
  pageSelect: (
    <g>
      <Page />
      <rect x="11" y="10" width="14" height="15" fill="none" stroke="#2a4a68" strokeWidth="1.5" strokeDasharray="2 1.5" />
    </g>
  ),
  pageZoom: (
    <g>
      <Page />
      <Lens x={16} y={16} r={5} />
    </g>
  ),
  pageEye: (
    <g>
      <Page />
      <path d="M7 19Q16 9 26 19Q16 28 7 19Z" fill="#fff" stroke={NAVY} strokeWidth="1.4" />
      <circle cx="16.5" cy="18.5" r="3.5" fill={NAVY} />
    </g>
  ),
  pageClose: (
    <g>
      <Page />
      <circle cx="18" cy="18" r="7" fill="#eef3f8" stroke="#35627f" strokeWidth="1.5" />
      <path d="M14.5 14 21.500 22M21.500 14 14.500 22" stroke="#35627f" strokeWidth="1.5" />
    </g>
  ),
};

const Icon = ({ name }: { name: string }) => (
  <svg viewBox="0 0 26 26" className="size-[26px] shrink-0 overflow-visible" fill="none" aria-hidden="true">
    {icons[name]}
  </svg>
);

const ToolButton = ({ name, active }: { name: string; active?: boolean }) => (
  <button
    type="button"
    aria-label={name}
    className={`flex h-[37px] min-w-0 flex-1 items-center justify-center rounded-sm border ${active ? "border-[#c3b690] bg-gradient-to-b from-[#f8c78c] via-[#ffb653] to-[#fff0a0]" : "border-transparent"}`}
  >
    <Icon name={name} />
  </button>
);

const Tools = ({ names, active = [] }: { names: string; active?: string[] }) => (
  <>
    {names.split(" ").map((name) =>
      name === "|" ? (
        <span key={name} className="mx-1 h-6 w-px shrink-0 bg-[#a9aeb9]" />
      ) : (
        <ToolButton key={name} name={name} active={active.includes(name)} />
      ),
    )}
  </>
);

const Grip = () => (
  <span className="mx-[3px] h-7 w-[3px] shrink-0 bg-[repeating-linear-gradient(180deg,#aab0bd_0px,#aab0bd_2px,transparent_2px,transparent_5px)]" />
);

const Toolbar = ({ width, children }: { width: string; children: React.ReactNode }) => (
  <div className={`flex h-[42px] shrink-0 rounded bg-gradient-to-b from-[#bcc2cd] to-[#a9aeb9] ${width}`}>
    <div className="flex min-w-0 flex-1 items-center rounded border-b border-[#b6bbc6] bg-gradient-to-b from-[#e9eef8] to-[#d2d6df] pr-[3px] pl-[2px]">
      <Grip />
      {children}
    </div>
    <button type="button" aria-label="toolbar options" className="flex w-3 flex-col items-center justify-end gap-[2px] pb-[5px]">
      <span className="h-[2px] w-2 bg-[#f1f3f7]" />
      <span className="border-x-4 border-t-[5px] border-x-transparent border-t-[#6e737c]" />
    </button>
  </div>
);

const ToolSelect = ({ label, value, className }: { label: string; value: string; className: string }) => (
  <div className={`relative shrink-0 ${className}`}>
    <select aria-label={label} className="block h-[23px] w-full appearance-none bg-white pr-5 pl-[2px] text-[16px] leading-[23px] text-black">
      <option>{value}</option>
    </select>
    <span className="pointer-events-none absolute inset-y-px right-px flex w-[17px] items-center justify-center bg-[#dde1ea]">
      <span className="border-x-4 border-t-4 border-x-transparent border-t-[#7b8089]" />
    </span>
  </div>
);

// Latin runs are set smaller than the Chinese text; "_X" marks a mnemonic.
const Label = ({ text }: { text: string }) => (
  <>
    {text.split(/([\x20-\x7e]+)/).map((run, i) =>
      i % 2 ? (
        <span key={i} className="text-[14px]">
          {run.split(/(_[A-Z])/).map((part, j) => (j % 2 ? <u key={j}>{part[1]}</u> : part))}
        </span>
      ) : (
        run
      ),
    )}
  </>
);

const menuBar = ["文件(_F)", "编辑(_E)", "视图(_W)", "工具(_T)", "数字化(_I)", "分析(_A)", "图层(_Y)", "搜索(_S)", "GPS", "帮助(_H)"];

interface MenuEntry {
  text: string;
  icon?: string;
  shortcut?: string;
  sub?: boolean;
  active?: boolean;
}

const contextMenu: (MenuEntry | null)[] = [
  { text: "编辑 - 编辑选定的要素(_E)" },
  { text: "清除 - 清除当前选择", icon: "clear" },
  { text: "移动 - 移动选定的要素 (Ctrl+Shift+M)", icon: "move", shortcut: "Ctrl+Shift+M" },
  { text: "删除 - 删除选定的要素(_D)" },
  null,
  { text: "从库中插入场馆..." },
  { text: "创建 区/多边形 要素(_A)", sub: true },
  { text: "创建线要素(_L)", sub: true },
  { text: "创建 点/文本 要素(_P)", sub: true },
  { text: "Create _Volumetric Features", sub: true },
  { text: "高级要素创建选项", sub: true, active: true },
  null,
  { text: "移动/重塑 要素(_M)", sub: true },
  { text: "顶点编辑(_V)", sub: true },
  { text: "属性/样式 功能", sub: true },
  { text: "高级选择选项", sub: true },
  { text: "分析/测量(_A)", sub: true },
  { text: "搜索(_S)", sub: true },
  { text: "选项(_O)", sub: true },
];

const createMenu: (MenuEntry | null)[] = [
  { text: "BUFFER - Create Buffers Around Selected Feature(s)", icon: "buffer" },
  { text: "CYLINDRICAL BUFFER - Create Cylindrical Buffers Around Selected Feature(s)" },
  { text: "SPHERICAL BUFFER - Create Spherical Buffers Around Selected Point Feature(s)" },
  { text: "网格 - 创建用户指定 大小/方向 的常规网格...", icon: "grid" },
  null,
  { text: "从选定的点创建矢量场图 (方向矢量)..." },
  { text: "平均 - 在选定的点要素的形心创建点" },
  null,
  { text: "从选定的点创建新的线要素", active: true },
  { text: "从选定的点创建晶须线 (给定方位的线)..." },
  { text: "为 选定/加载 的要素创建覆盖区 (凹形体)" },
  { text: "从库中插入场馆..." },
];

const Menu = ({ entries, className }: { entries: (MenuEntry | null)[]; className: string }) => (
  <div
    role="menu"
    className={`absolute flex flex-col rounded-sm border border-[#85888e] bg-[linear-gradient(90deg,#e9eef8_42px,#c9ced6_42px,#c9ced6_43px,#fafafa_43px)] px-px pt-[2px] pb-[3px] text-[16px] leading-5 text-[#4c5260] shadow-[4px_4px_2px_rgba(0,0,0,0.25)] ${className}`}
  >
    {entries.map((entry, i) =>
      entry ? (
        <button
          key={i}
          type="button"
          role="menuitem"
          className={`flex min-h-0 flex-1 items-center rounded-sm border pb-px text-left whitespace-pre ${entry.active ? "border-[#e3cf86] bg-[linear-gradient(180deg,#fffdf0_0%,#feeba8_49%,transparent_50%),linear-gradient(180deg,transparent_55%,rgba(255,240,170,0.7)_100%),linear-gradient(90deg,#ffd43a,#ffd43a_10%,#fbd274_50%,#ffd43a_92%)]" : "border-transparent"}`}
        >
          <span className="flex w-[40px] shrink-0 justify-center">{entry.icon && <Icon name={entry.icon} />}</span>
          <span className="flex-1 pl-[7px]">
            <Label text={entry.text} />
          </span>
          {entry.shortcut && <span className="pr-[13px] text-[14px]">{entry.shortcut}</span>}
          {entry.sub && <span className="mr-[6px] border-y-[6px] border-l-[6px] border-y-transparent border-l-[#454c58]" />}
        </button>
      ) : (
        <hr key={i} className="my-1 ml-[54px] border-t-2 border-[#d5d6d8]" />
      ),
    )}
  </div>
);

const TreeCheck = ({ label, initial, tone }: { label: string; initial: boolean; tone: string }) => {
  const [checked, setChecked] = useState(initial);
  return (
    <label className="relative mr-[2px] shrink-0">
      <input
        type="checkbox"
        aria-label={label}
        checked={checked}
        onChange={(e) => setChecked(e.target.checked)}
        className={`block size-[15px] appearance-none border border-black ${tone}`}
      />
      {checked && (
        <svg viewBox="0 0 15 15" className="pointer-events-none absolute inset-0 size-[15px]" fill="none">
          <path d="M3 7.5 6 10.5 12 4" stroke="#111" strokeWidth="1.8" />
        </svg>
      )}
    </label>
  );
};

const LayerIcon = ({ children }: { children: React.ReactNode }) => (
  <svg viewBox="0 0 17 17" className="size-[17px] shrink-0" fill="none">
    <rect x="0.5" y="0.5" width="16" height="16" fill="#f4f000" stroke="#96941c" />
    {children}
  </svg>
);

const ControlCenter = () => (
  <aside className="flex w-[713px] shrink-0 flex-col border-x border-[#c9cdd6]">
    <header className="flex h-6 items-center bg-[#b9c0cb] pr-[5px] pb-[2px] pl-1 text-[16px] leading-5 text-[#4c5260]">
      <h2 className="flex-1 whitespace-pre">
        <Label text="控制中心 (2 层, 1 已选)" />
      </h2>
      <div className="flex items-center gap-[11px] text-[#6b7079]">
        <button type="button" aria-label="hide" className="flex h-[10px] w-2 items-end"><span className="h-[2px] w-full bg-[#6b7079]" /></button>
        <button type="button" aria-label="maximize" className="size-[11px] border border-t-2 border-[#6b7079]" />
        <button type="button" aria-label="close">
          <svg viewBox="0 0 10 10" className="size-[10px]"><path d="M1 1 9 9M9 1 1 9" stroke="#6b7079" strokeWidth="1.5" /></svg>
        </button>
      </div>
    </header>
    <div className="flex h-[39px] shrink-0 items-center bg-gradient-to-b from-[#e9eef8] to-[#d0d4dd]">
      <div className="flex w-[265px] pl-px">
        <Tools names="pageWrench more tableIcon pageSelect pageZoom pageEye pageClose" />
      </div>
    </div>
    <div className="flex-1 border-t-2 border-[#a9adb5] bg-white text-[15px] leading-6 text-[#222]">
      <div className="flex h-6 items-center pl-[9px]">
        <button type="button" aria-label="collapse" className="flex size-[11px] items-center justify-center border border-[#969696] bg-white">
          <span className="h-px w-[7px] bg-[#2b50b0]" />
        </button>
        <span className="w-[9px] border-t border-dotted border-[#888]" />
        <TreeCheck label="当前工作区" initial tone="bg-[#c4c4c4]" />
        <LayerIcon>
          <rect x="2.5" y="2.5" width="12" height="12" fill="#fff" />
          <path d="M3 3H13L9 7 3 9Z" fill="#e0101c" />
          <path d="M4 10 8 7 14 8M10 6 13 4" stroke="#1c1ca0" strokeWidth="1.5" />
          <path d="M4 11H7V14H4ZM10 11H12V14H10Z" fill="#d01818" />
        </LayerIcon>
        <span className="ml-2">当前工作区</span>
      </div>
      <div className="ml-[38px] h-[38px] border-l border-dotted border-[#888]">
        <div className="flex h-[25px] items-center">
          <span className="w-[14px] border-t border-dotted border-[#888]" />
          <TreeCheck label="template.kml" initial tone="bg-white" />
          <LayerIcon>
            <circle cx="8.5" cy="8.5" r="6.5" fill="#141c78" />
            <path d="M4 5 8 3 10 5 8 8 5 8ZM9 9 12 9 12 12 9 14Z" fill="#9aa89c" />
          </LayerIcon>
          <span className="ml-2">template.kml [21 Features]</span>
        </div>
        <div className="flex h-[25px] items-center">
          <span className="w-[14px] border-t border-dotted border-[#888]" />
          <TreeCheck label="11111" initial={false} tone="bg-white" />
          <LayerIcon>
            <rect x="2.5" y="2.5" width="12" height="12" fill="#fff" />
            <path d="M3 8.5H14M6.5 4V8.5M10.5 8.500V13" stroke="#1c1c90" strokeWidth="1.3" />
          </LayerIcon>
          <span className="ml-[6px] bg-[#0078d7] px-[3px] leading-[25px] text-white">11111 [1 Features]</span>
        </div>
      </div>
    </div>
  </aside>
);

const ScaleBar = () => (
  <svg viewBox="0 0 492 79" className="absolute bottom-[4px] left-[2px] h-[79px] w-[492px]" fontFamily="Liberation Serif, serif" fontSize="18" textAnchor="middle">
    <path d="M1 78V1H491" fill="none" stroke="#444" strokeWidth="1.5" />
    <path d="M491 0V78H0" fill="none" stroke="#000" strokeWidth="2.5" />
    <path d="M43 23H451M43 12V36M124.5 12V36M206 12V36M287 12V36M368.5 12V36M451 12V36" fill="none" stroke="#000" strokeWidth="2" />
    <text x="44" y="65">0 m</text>
    <text x="125" y="65">250 m</text>
    <text x="207" y="65">500 m</text>
    <text x="288" y="65">750 m</text>
    <text x="452" y="65">1250 m</text>
  </svg>
);

const MapCanvas = () => (
  <main className="relative ml-[6px] min-w-0 flex-1 overflow-hidden border-t-2 border-l-2 border-[#83868b] bg-white">
    <svg className="absolute top-0 left-0 h-[960px] w-[1198px]" fill="none">
      <g transform="translate(-721 -240)">
        <path d="M1137 530V495H1170V530M1178 530V498H1210V530M1221 530V500H1254V530M1261 530V500H1294V530M1301 530V500H1335V530" stroke="#f01818" strokeWidth="1.3" />
        <path d="M1217 900V928H1245M1700 742H1715M1700 782H1715M1700 1123H1715M1700 1163H1715" stroke="#f04848" strokeWidth="1.4" />
        <circle cx="1232" cy="911" r="3" fill="#000" />
        <circle cx="1712" cy="1142" r="2" fill="#444" />
        <path d="M892 906H902" stroke="#8b8e94" strokeWidth="4" />
      </g>
    </svg>
    <ScaleBar />
  </main>
);

const Arrows = () => (
  <svg className="pointer-events-none absolute top-0 left-0 h-[1000px] w-[1900px]" fill="#ff2412">
    <path d="M1798 488 1380 874 1385 877 1368 882 1371 866 1375 869 1797 487Z" />
    <path d="M1326 884 1098 790 1094 795 1086 784 1100 782 1100 786 1326 882Z" />
  </svg>
);

const ImeBar = () => (
  <div className="absolute bottom-0 left-[1309px] flex h-[39px] items-center">
    <svg viewBox="0 0 40 40" className="z-10 h-[39px] w-[40px]">
      <rect x="3" y="3" width="34" height="34" rx="4" fill="#f4571f" transform="rotate(-12 20 20)" />
      <text x="20" y="32" textAnchor="middle" fontSize="35" fontWeight="700" fontFamily="Liberation Sans, sans-serif" fill="#fff" transform="rotate(-6 20 20)">S</text>
    </svg>
    <div className="-ml-3 flex h-[32px] w-[104px] items-center justify-between rounded-sm border border-[#c3d5ea] bg-white pr-1 pl-[18px]">
      <span className="text-[19px] leading-6 font-bold text-[#0b76dc]">中</span>
      <svg viewBox="0 0 16 16" className="size-4" fill="none">
        <circle cx="4" cy="4" r="2.2" stroke="#0b76dc" strokeWidth="2" />
        <circle cx="12" cy="9" r="2.5" fill="#0b76dc" />
        <path d="M14.5 9Q14.5 13 10.500 15" stroke="#0b76dc" strokeWidth="1.5" />
      </svg>
      <svg viewBox="0 0 20 18" className="h-[18px] w-5">
        <rect x="1" y="1" width="18" height="10" rx="5" fill="#0b76dc" />
        <path d="M2 8 1 16Q4 18 6 14H14Q16 18 19 16L18 8Z" fill="#0b76dc" />
        <path d="M7 12H13L14 18H6Z" fill="#fff" />
        <path d="M4 6H9M6.5 3.500V8.500" stroke="#fff" strokeWidth="1.5" />
        <circle cx="13" cy="5" r="1.2" fill="#fff" />
        <circle cx="15.5" cy="7.5" r="1.2" fill="#fff" />
      </svg>
    </div>
  </div>
);

export default function App() {
  return (
    <div className="relative flex min-h-screen flex-col overflow-hidden bg-[#d0d4dd] font-['Open_Sans','Noto_Sans_CJK_SC',sans-serif]">
      <header className="flex h-[27px] shrink-0 items-center bg-white pb-[2px] pl-[2px] text-[16px] leading-6 text-black">
        <svg viewBox="0 0 20 20" className="size-5" aria-hidden="true">
          <path d="M10 1A8 8 0 1 0 18 10Q17 15 10 14Q5 12 7 6Q8 3 10 1Z" fill="#8fb86a" />
          <path d="M1 12Q7 19 18 13Q15 20 9 20Q2 18 1 12Z" fill="#1b4c60" />
          <circle cx="12.5" cy="6" r="4.2" fill="#dbe6c8" />
        </svg>
        <h1 className="ml-[5px] flex-1 whitespace-pre">
          Global Mapper Pro v24.0 (b092022) [64-bit] [+OTF]- <span className="text-[15px]">中文注册版</span>
        </h1>
        <div className="flex">
          <button type="button" aria-label="minimize" className="flex w-[58px] items-center justify-center">
            <svg viewBox="0 0 12 12" className="size-3"><path d="M0 6.5H12" stroke="#000" /></svg>
          </button>
          <button type="button" aria-label="restore" className="flex w-[58px] items-center justify-center">
            <svg viewBox="0 0 12 12" className="size-3" fill="none"><path d="M.5 3.500H9.500V11.500H.5ZM2.500 3V.5H11.500V9.500H10" stroke="#000" /></svg>
          </button>
          <button type="button" aria-label="close" className="mr-[3px] flex w-[58px] items-center justify-center">
            <svg viewBox="0 0 12 12" className="size-3"><path d="M.5.5 11.500 11.500M11.500.5.5 11.500" stroke="#000" /></svg>
          </button>
        </div>
      </header>

      <nav className="flex h-[40px] shrink-0 items-center pb-[2px] pl-[3px] text-[16px] text-[#565c6a]">
        <Grip />
        <div className="ml-[9px] flex items-center gap-[18px]">
          {menuBar.map((text) => (
            <button key={text} type="button" className="whitespace-pre">
              <Label text={text} />
            </button>
          ))}
        </div>
      </nav>

      <div className="flex flex-col gap-px pl-[3px]">
        <div className="flex gap-px">
          <Toolbar width="w-[288px]">
            <Tools names="open globe save layout wrench control overlay" active={["control"]} />
          </Toolbar>
          <Toolbar width="w-[253px]">
            <Tools names="zoomBox pan zoomIn zoomOut back home" />
          </Toolbar>
          <Toolbar width="w-[177px]">
            <Tools names="edit lasso clear unlock" active={["edit"]} />
          </Toolbar>
          <Toolbar width="w-[178px]">
            <Tools names="measure info search script" />
          </Toolbar>
          <Toolbar width="ml-[10px] w-[440px]">
            <Tools names="elev contour cut volume viewshed watershed combine heat plane paint fly" />
          </Toolbar>
        </div>
        <div className="flex gap-px">
          <Toolbar width="w-[748px]">
            <Tools names="panels north mirror view3d link3d water waterMinus waterPlus sunHill hill" active={["link3d", "hill"]} />
            <ToolSelect label="着色器" value="Atlas 着色器" className="mr-[3px] ml-[2px] w-[341px]" />
          </Toolbar>
          <Toolbar width="w-[139px]">
            <Tools names="web moonGear moon" />
          </Toolbar>
          <Toolbar width="w-[310px]">
            <ToolSelect label="收藏夹" value="设置收藏夹列表..." className="mr-[2px] ml-1 w-[239px]" />
            <Tools names="star" />
          </Toolbar>
          <Toolbar width="w-[253px]">
            <Tools names="drawPoints drawLine drawFree drawArea drawRect drawCircle" />
          </Toolbar>
          <Toolbar width="w-[374px]">
            <Tools names="angle rings grid cogo mirrorDraw moveArea hexes | finish repair" />
          </Toolbar>
        </div>
        <div className="flex gap-px">
          <Toolbar width="w-[523px]">
            <Tools names="move rotate vertices moveOff addVertex | trace split convertPoints convertLine convertArea combineAreas crop buffer" />
          </Toolbar>
          <Toolbar width="w-[774px]">
            <ToolSelect label="Lidar" value="按分类着色 Lidar" className="mr-[3px] ml-1 w-[291px]" />
            <Tools names="filter cluster clusterFind pointFind thin picker triangle segment compare mesh layers drone" />
          </Toolbar>
          <Toolbar width="w-[439px]">
            <Tools names="terrain grass bush tree building pole wires waterClass rail key classify" />
          </Toolbar>
        </div>
        <div className="flex gap-px">
          <Toolbar width="w-[288px]">
            <Tools names="autoRail autoTerrain autoBuilding autoPole drip puzzle magic" />
          </Toolbar>
          <Toolbar width="w-[253px]">
            <Tools names="play stop turtle rabbit pageAdd pageRemove" />
          </Toolbar>
          <Toolbar width="w-[65px]">
            <Tools names="leaf" />
          </Toolbar>
        </div>
      </div>

      <div className="flex flex-1 pr-[2px]">
        <ControlCenter />
        <MapCanvas />
      </div>

      <footer className="flex h-[24px] shrink-0 items-center border-t border-[#9da1aa] bg-gradient-to-b from-[#dfe1e8] via-[#b3b8c2] to-[#b1b5bf] pl-1 text-[16px] leading-5 text-[#33373f]">
        <span className="flex-1">从选定的点创建新的线要素</span>
        <span className="border-r border-[#8d929c] pr-[3px] text-[13px] whitespace-pre">S 84 ( 115.657047487, 34.001041421 )</span>
        <span className="pr-[3px] pl-[5px] text-[13px] whitespace-pre">34° 00' 03.7491" N, 115° 39' 25.3710" E</span>
      </footer>

      <Menu entries={contextMenu} className="top-[513px] left-[1236px] h-[664px] w-[475px]" />
      <Menu entries={createMenu} className="top-[502px] left-[643px] h-[401px] w-[594px]" />
      <Arrows />
      <ImeBar />
    </div>
  );
}
